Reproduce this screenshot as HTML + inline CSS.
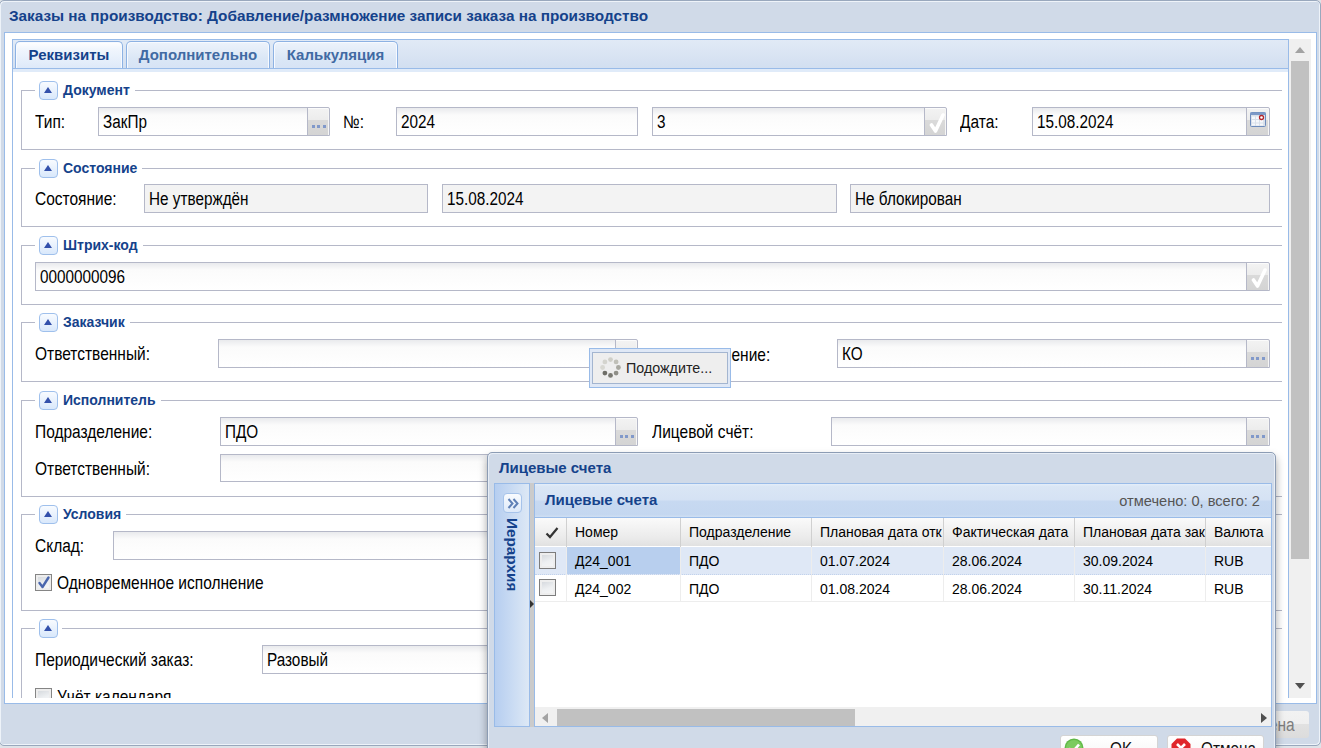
<!DOCTYPE html>
<html><head><meta charset="utf-8">
<style>
*{box-sizing:border-box;margin:0;padding:0}
html,body{width:1321px;height:748px;overflow:hidden;background:#dfe3e8;font-family:"Liberation Sans",sans-serif;position:relative}
.a{position:absolute}
.win{left:-1px;top:0;width:1322px;height:746px;background:#d0dae8;border:1px solid #99a8bd;border-radius:5px;box-shadow:inset 1px 1px 0 #eef3f9,inset -1px -1px 0 #eef3f9}
.title{left:9px;top:0;height:31px;line-height:31px;font-size:15.3px;font-weight:bold;color:#15428b;white-space:nowrap}
.body{left:4px;top:32px;width:1313px;height:672px;background:#fff;border:1px solid #99bbe8}
.strip{left:12px;top:39px;width:1277px;height:31px;background:linear-gradient(#e1eaf6,#d1def0);border:1px solid #99bbe8;border-bottom:none}
.stripline{left:12px;top:68px;width:1277px;height:1px;background:#99bbe8}
.stripband{left:13px;top:69px;width:1275px;height:3px;background:#e0ebf9}
.tab{top:41px;height:28px;border:1px solid #8db2e3;border-bottom:none;border-radius:5px 5px 0 0;background:linear-gradient(#edf3fb,#dbe7f6 60%,#d6e3f5);box-shadow:inset 1px 1px 0 #f7faff,inset -1px 0 0 #f7faff;font-size:15px;font-weight:bold;color:#416aa3;line-height:26px;text-align:center;white-space:nowrap}
.tab.act{background:linear-gradient(#ffffff,#f1f6fd 25%,#dde9f9);color:#15428b;height:28px}
.tpl{left:12px;top:69px;width:1px;height:629px;background:#99bbe8}
.tpr{left:1288px;top:69px;width:1px;height:629px;background:#99bbe8}
.fs{left:21px;width:1261px;border:1px solid #b5b8c8;border-right:none}
.fsmask{background:#fff;height:3px}
.tool{left:39px;width:19px;height:19px;border:1px solid #9fc0ec;border-radius:4px;background:linear-gradient(#f8fbff,#d9e8fb)}
.tool:after{content:"";position:absolute;left:4px;top:5px;border-left:4.5px solid transparent;border-right:4.5px solid transparent;border-bottom:6px solid #3350ab}
.leg{font-size:14px;font-weight:bold;color:#15428b;white-space:nowrap;height:19px;line-height:19px;background:#fff;padding:0 5px 0 28px}
.lbl{font-size:15.5px;color:#000;white-space:nowrap;line-height:20px;height:20px;transform:scaleY(1.15)}
.v{display:inline-block;transform:scaleY(1.15)}
.inp{height:29px;border:1px solid #b5b8c8;background:linear-gradient(#e9eaed 0,#fbfbfb 7px,#fff 100%);font-size:15.3px;line-height:27px;padding-left:4px;color:#000;white-space:nowrap;overflow:hidden}
.ro{background:#f3f3f3}
.trg{width:23px;height:29px;border:1px solid #b5b8c8;border-radius:0 2px 0 0;background:linear-gradient(#f3f3f3 0,#ececec 45%,#dadada 45%,#d4d4d4 100%);box-shadow:inset 0 1px 0 #fbfbfb,inset -1px 0 0 #f6f6f6}
.dots{position:absolute;left:4px;top:17px;width:14px;height:3px;background:linear-gradient(to right,#8199ca 3px,transparent 3px,transparent 5px,#8199ca 5px,#8199ca 8px,transparent 8px,transparent 11px,#8199ca 11px)}
.sb{left:1289px;top:39px;width:22px;height:659px;background:#f0f0f0}
.thumb{left:1291px;top:61px;width:18px;height:498px;background:#c1c1c1}
.upar{left:1295px;top:47px;border-left:5px solid transparent;border-right:5px solid transparent;border-bottom:6px solid #a3a3a3}
.dnar{left:1295px;top:683px;border-left:5px solid transparent;border-right:5px solid transparent;border-top:6px solid #505050}
.cb{width:17px;height:17px;border:1.5px solid #858585;background:linear-gradient(160deg,#cfd3d8,#eef0f2 55%,#f7f7f7);box-shadow:inset 0 0 0 2px #ededed}

.hd{top:34px;width:1px;height:29px;background:#d0d0d0}
.ht{top:38px;height:21px;line-height:21px;font-size:14px;color:#000;white-space:nowrap}
.rl{width:1px;background:#ededed}
.ct{height:27px;line-height:28px;font-size:14px;color:#000;white-space:nowrap}
.gcb{width:17px;height:17px;border:1.5px solid #7d7d7d;background:linear-gradient(160deg,#cfd3d8,#eef0f2 55%,#f7f7f7);box-shadow:inset 0 0 0 2px #eeeeee}
.pbtn{height:30px;border:1px solid #d4d4d4;border-radius:3px;background:linear-gradient(#ffffff,#f4f4f4)}
</style></head><body>
<div class="a win"></div>
<div class="a title">Заказы на производство: Добавление/размножение записи заказа на производство</div>
<div class="a body"></div>

<!-- tab strip -->
<div class="a strip"></div>
<div class="a tab act" style="left:15px;width:108px">Реквизиты</div>
<div class="a tab" style="left:126px;width:144px">Дополнительно</div>
<div class="a tab" style="left:273px;width:125px">Калькуляция</div>
<div class="a stripline"></div>
<div class="a stripband"></div>
<div class="a tpl"></div>
<div class="a tpr"></div>

<!-- content clip -->
<div class="a" id="content" style="left:13px;top:71px;width:1275px;height:627px;overflow:hidden">
 <div class="a" style="left:-13px;top:-71px;width:1321px;height:748px">

 <!-- Документ -->
 <div class="a fs" style="top:90px;height:60px"></div>
 <div class="a leg" style="left:35px;top:81px">Документ</div>
 <div class="a tool" style="top:81px"></div>
 <div class="a lbl" style="left:35px;top:112px">Тип:</div>
 <div class="a inp" style="left:98px;top:107px;width:210px"><span class="v">ЗакПр</span></div>
 <div class="a trg" style="left:307px;top:107px"><div class="dots"></div></div>
 <div class="a lbl" style="left:343px;top:112px">№:</div>
 <div class="a inp" style="left:396px;top:107px;width:242px"><span class="v">2024</span></div>
 <div class="a inp" style="left:652px;top:107px;width:273px"><span class="v">3</span></div>
 <div class="a trg chk" style="left:924px;top:107px"><svg class="a" style="left:3px;top:4px" width="17" height="21" viewBox="0 0 17 21"><path d="M3.5 13 L7.5 19 L15 3" stroke="#fff" stroke-width="3.6" fill="none" stroke-linejoin="round" stroke-linecap="round"/></svg></div>
 <div class="a lbl" style="left:960px;top:112px">Дата:</div>
 <div class="a inp" style="left:1032px;top:107px;width:215px"><span class="v">15.08.2024</span></div>
 <div class="a trg cal" style="width:24px;left:1246px;top:107px"><svg class="a" style="left:3px;top:4px" width="16" height="15" viewBox="0 0 16 15"><rect x="0.5" y="0.5" width="15" height="14" rx="1" fill="#d9e0ea" stroke="#6d8cbd"/><rect x="0.5" y="0.5" width="15" height="2.5" fill="#7c99c7"/><g fill="#f6f8fb"><rect x="2" y="4.5" width="3" height="2.5"/><rect x="6" y="4.5" width="3" height="2.5"/><rect x="2" y="8" width="3" height="2.5"/><rect x="6" y="8" width="3" height="2.5"/><rect x="10" y="8" width="3" height="2.5"/><rect x="2" y="11.5" width="3" height="2"/><rect x="6" y="11.5" width="3" height="2"/><rect x="10" y="11.5" width="3" height="2"/></g><circle cx="11.5" cy="5.5" r="2" fill="#fff" stroke="#b3262b" stroke-width="1.3"/></svg></div>

 <!-- Состояние -->
 <div class="a fs" style="top:168px;height:59px"></div>
 <div class="a leg" style="left:35px;top:159px">Состояние</div>
 <div class="a tool" style="top:159px"></div>
 <div class="a lbl" style="left:35px;top:189px">Состояние:</div>
 <div class="a inp ro" style="left:144px;top:184px;width:284px"><span class="v">Не утверждён</span></div>
 <div class="a inp ro" style="left:442px;top:184px;width:395px"><span class="v">15.08.2024</span></div>
 <div class="a inp ro" style="left:850px;top:184px;width:420px"><span class="v">Не блокирован</span></div>

 <!-- Штрих-код -->
 <div class="a fs" style="top:245px;height:60px"></div>
 <div class="a leg" style="left:35px;top:236px">Штрих-код</div>
 <div class="a tool" style="top:236px"></div>
 <div class="a inp" style="left:35px;top:262px;width:1212px"><span class="v">0000000096</span></div>
 <div class="a trg chk" style="width:24px;left:1246px;top:262px"><svg class="a" style="left:3px;top:4px" width="17" height="21" viewBox="0 0 17 21"><path d="M3.5 13 L7.5 19 L15 3" stroke="#fff" stroke-width="3.6" fill="none" stroke-linejoin="round" stroke-linecap="round"/></svg></div>

 <!-- Заказчик -->
 <div class="a fs" style="top:322px;height:60px"></div>
 <div class="a leg" style="left:35px;top:313px">Заказчик</div>
 <div class="a tool" style="top:313px"></div>
 <div class="a lbl" style="left:35px;top:344px">Ответственный:</div>
 <div class="a inp" style="left:218px;top:339px;width:398px"></div>
 <div class="a trg" style="left:615px;top:339px"><div class="dots"></div></div>
 <div class="a lbl" style="left:653px;top:345px">Подразделение:</div>
 <div class="a inp" style="left:837px;top:339px;width:410px"><span class="v">КО</span></div>
 <div class="a trg" style="width:24px;left:1246px;top:339px"><div class="dots"></div></div>

 <!-- Исполнитель -->
 <div class="a fs" style="top:400px;height:97px"></div>
 <div class="a leg" style="left:35px;top:391px">Исполнитель</div>
 <div class="a tool" style="top:391px"></div>
 <div class="a lbl" style="left:35px;top:422px">Подразделение:</div>
 <div class="a inp" style="left:220px;top:417px;width:396px"><span class="v">ПДО</span></div>
 <div class="a trg" style="left:615px;top:417px"><div class="dots"></div></div>
 <div class="a lbl" style="left:652px;top:422px">Лицевой счёт:</div>
 <div class="a inp" style="left:831px;top:417px;width:416px"></div>
 <div class="a trg" style="width:24px;left:1246px;top:417px"><div class="dots"></div></div>
 <div class="a lbl" style="left:35px;top:459px">Ответственный:</div>
 <div class="a inp" style="left:220px;top:454px;width:396px;height:28px"></div>
 <div class="a trg" style="left:615px;top:454px;height:28px"><div class="dots"></div></div>

 <!-- Условия -->
 <div class="a fs" style="top:514px;height:97px"></div>
 <div class="a leg" style="left:35px;top:505px">Условия</div>
 <div class="a tool" style="top:505px"></div>
 <div class="a lbl" style="left:35px;top:536px">Склад:</div>
 <div class="a inp" style="left:113px;top:531px;width:1134px"></div>
 <div class="a trg" style="width:24px;left:1246px;top:531px"><div class="dots"></div></div>
 <div class="a cb chkd" style="left:35px;top:574px"><svg class="a" style="left:1px;top:0px" width="14" height="15" viewBox="0 0 14 15"><path d="M2.5 8 L5.5 12 L11.5 2.5" stroke="#4a66ad" stroke-width="2.4" fill="none" stroke-linecap="round" stroke-linejoin="round"/></svg></div>
 <div class="a lbl" style="left:57px;top:573px">Одновременное исполнение</div>

 <!-- last -->
 <div class="a fs" style="top:628px;height:120px"></div>
 <div class="a leg" style="left:35px;top:619px;padding:0 0 0 27px"></div>
 <div class="a tool" style="top:619px"></div>
 <div class="a lbl" style="left:35px;top:650px">Периодический заказ:</div>
 <div class="a inp" style="left:262px;top:645px;width:985px"><span class="v">Разовый</span></div>
 <div class="a trg" style="width:24px;left:1246px;top:645px"></div>
 <div class="a cb" style="left:35px;top:688px"></div>
 <div class="a lbl" style="left:57px;top:687px">Учёт календаря</div>
 </div>
</div>

<!-- scrollbar -->
<div class="a sb"></div>
<div class="a thumb"></div>
<div class="a upar"></div>
<div class="a dnar"></div>


<!-- bottom toolbar button of main window -->
<div class="a" style="left:1200px;top:711px;width:109px;height:27px;border-radius:3px;background:linear-gradient(#f2f2f2 0,#efefef 50%,#e1e1e1 50%,#dcdcdc 100%);font-size:15px;color:#a0a0a0;line-height:27px;padding-left:39px;overflow:hidden"><span class="v" style="font-size:15.5px;color:#7d7d7d">Отмена</span></div>

<!-- loading mask -->
<div class="a" style="left:589px;top:348px;width:142px;height:40px;border:1px solid #99bbe8;background:#dfe8f6"></div>
<div class="a" style="left:592px;top:352px;width:136px;height:32px;border:1px solid #a3b5d0;background:#eeeeee"></div>
<svg class="a" style="left:600px;top:357px" width="21" height="21" viewBox="0 0 21 21">
 <circle cx="10.5" cy="2.6" r="2.4" fill="#cfcfc8"/>
 <circle cx="16.1" cy="4.9" r="2.4" fill="#c0c0b8"/>
 <circle cx="18.4" cy="10.5" r="2.4" fill="#a8a8a0"/>
 <circle cx="16.1" cy="16.1" r="2.4" fill="#8f8f88"/>
 <circle cx="10.5" cy="18.4" r="2.4" fill="#7a7a73"/>
 <circle cx="4.9" cy="16.1" r="2.4" fill="#6e6e68"/>
 <circle cx="2.6" cy="10.5" r="2.4" fill="#d8d8d2"/>
 <circle cx="4.9" cy="4.9" r="2.4" fill="#d4d4ce"/>
</svg>
<div class="a" style="left:626px;top:358px;height:20px;line-height:20px;font-size:14.3px;color:#222;white-space:nowrap">Подождите...</div>

<!-- popup shadow -->

<!-- popup window -->
<div class="a" style="left:487px;top:452px;width:789px;height:310px;background:#d0dae8;border:1px solid #8c9cb4;border-radius:5px;box-shadow:inset 1px 1px 0 #e8eef6,inset -1px 0 0 #e8eef6,0 5px 8px 0 rgba(0,0,0,0.36)"></div>
<div class="a" style="left:499px;top:458px;height:20px;line-height:20px;font-size:15px;font-weight:bold;color:#15428b;white-space:nowrap">Лицевые счета</div>

<!-- west collapsed -->
<div class="a" style="left:494px;top:483px;width:36px;height:244px;border:1px solid #99bbe8;background:linear-gradient(to right,#b6cef0,#c9dbf3 50%,#dde8f5)"></div>
<div class="a" style="left:503px;top:493px;width:19px;height:20px;border:1px solid #a6c3ea;border-radius:4px;background:linear-gradient(#f9fbfe,#dde9f9)"></div>
<svg class="a" style="left:507px;top:498px" width="13" height="11" viewBox="0 0 13 11"><path d="M1.5 1 L5.5 5.5 L1.5 10 M6.5 1 L10.5 5.5 L6.5 10" stroke="#5f80b6" stroke-width="2" fill="none"/></svg>
<div class="a" style="left:476px;top:544px;width:72px;height:20px;line-height:20px;font-size:15.3px;font-weight:bold;color:#15428b;white-space:nowrap;transform:rotate(90deg);text-align:left">Иерархия</div>
<!-- splitter -->
<div class="a" style="left:530px;top:483px;width:4px;height:244px;background:#cbcbcb"></div>
<div class="a" style="left:530px;top:600px;border-top:4px solid transparent;border-bottom:4px solid transparent;border-left:4px solid #333"></div>

<!-- grid panel -->
<div class="a" style="left:534px;top:483px;width:738px;height:244px;border:1px solid #99bbe8;background:#fff;overflow:hidden">
 <div class="a" style="left:0;top:0;width:736px;height:34px;border-bottom:1px solid #99bbe8;background:linear-gradient(#e4eefa 0,#dae6f5 8%,#d5e2f4 48%,#c7d9f1 52%,#c4d7f0 92%,#cfdff3 100%)"></div>
 <div class="a" style="left:10px;top:5px;height:21px;line-height:21px;font-size:15px;font-weight:bold;color:#15428b;white-space:nowrap">Лицевые счета</div>
 <div class="a" style="left:583px;top:7px;width:142px;height:21px;line-height:21px;font-size:14.6px;color:#555;white-space:nowrap;text-align:right">отмечено: 0, всего: 2</div>
 <!-- column headers -->
 <div class="a" style="left:0;top:34px;width:736px;height:29px;background:linear-gradient(#fafafa,#ebebeb 70%,#e1e1e1);border-bottom:1px solid #ffffff"></div>
 <div class="a hd" style="left:31px"></div><div class="a hd" style="left:145px"></div><div class="a hd" style="left:276px"></div><div class="a hd" style="left:408px"></div><div class="a hd" style="left:539px"></div><div class="a hd" style="left:670px"></div>
 <svg class="a" style="left:10px;top:42px" width="14" height="14" viewBox="0 0 14 14"><path d="M1.5 7.5 L5 11 L12.5 2" stroke="#333" stroke-width="2.2" fill="none"/></svg>
 <div class="a ht" style="left:40px">Номер</div>
 <div class="a ht" style="left:154px">Подразделение</div>
 <div class="a ht" style="left:285px;width:124px;overflow:hidden">Плановая дата отк</div>
 <div class="a ht" style="left:417px">Фактическая дата</div>
 <div class="a ht" style="left:548px;width:123px;overflow:hidden">Плановая дата зак</div>
 <div class="a ht" style="left:679px">Валюта</div>
 <!-- rows -->
 <div class="a" style="left:0;top:63px;width:736px;height:28px;background:#dfe8f6;border-bottom:1px dotted #c2d2ec"></div>
 <div class="a" style="left:32px;top:63px;width:113px;height:27px;background:#b8cfee"></div>
 <div class="a" style="left:0;top:91px;width:736px;height:27px;border-bottom:1px solid #ededed"></div>
 <div class="a rl" style="left:31px;top:63px;height:55px"></div><div class="a rl" style="left:145px;top:63px;height:55px"></div><div class="a rl" style="left:276px;top:63px;height:55px"></div><div class="a rl" style="left:408px;top:63px;height:55px"></div><div class="a rl" style="left:539px;top:63px;height:55px"></div><div class="a rl" style="left:670px;top:63px;height:55px"></div>
 <div class="a gcb" style="left:4px;top:68px"></div>
 <div class="a gcb" style="left:4px;top:95px"></div>
 <div class="a ct" style="left:40px;top:63px">Д24_001</div><div class="a ct" style="left:154px;top:63px">ПДО</div><div class="a ct" style="left:285px;top:63px">01.07.2024</div><div class="a ct" style="left:417px;top:63px">28.06.2024</div><div class="a ct" style="left:548px;top:63px">30.09.2024</div><div class="a ct" style="left:679px;top:63px">RUB</div>
 <div class="a ct" style="left:40px;top:91px">Д24_002</div><div class="a ct" style="left:154px;top:91px">ПДО</div><div class="a ct" style="left:285px;top:91px">01.08.2024</div><div class="a ct" style="left:417px;top:91px">28.06.2024</div><div class="a ct" style="left:548px;top:91px">30.11.2024</div><div class="a ct" style="left:679px;top:91px">RUB</div>
 <!-- h scrollbar -->
 <div class="a" style="left:0;top:223px;width:736px;height:19px;background:#f0f0f0"></div>
 <div class="a" style="left:22px;top:225px;width:298px;height:17px;background:#c1c1c1"></div>
 <div class="a" style="left:7px;top:229px;border-top:5px solid transparent;border-bottom:5px solid transparent;border-right:6px solid #a3a3a3"></div>
 <div class="a" style="left:726px;top:229px;border-top:5px solid transparent;border-bottom:5px solid transparent;border-left:6px solid #505050"></div>
</div>

<!-- popup buttons -->
<div class="a pbtn" style="left:1060px;top:735px;width:98px">
 <svg class="a" style="left:3px;top:2px" width="20" height="20" viewBox="0 0 20 20"><circle cx="10" cy="10" r="9.5" fill="#5fb846"/><circle cx="10" cy="10" r="8" fill="#7ccb5f"/><path d="M5 10.5 L8.5 14 L15 6.5" stroke="#fff" stroke-width="2.6" fill="none"/></svg>
 <div class="a" style="left:49px;top:3px;font-size:15.3px;line-height:20px;color:#111;transform:scaleY(1.15)">OK</div>
</div>
<div class="a pbtn" style="left:1167px;top:735px;width:97px">
 <svg class="a" style="left:3px;top:2px" width="20" height="20" viewBox="0 0 20 20"><path d="M6 0.5 H14 L19.5 6 V14 L14 19.5 H6 L0.5 14 V6 Z" fill="#e0262b"/><path d="M6 6 L14 14 M14 6 L6 14" stroke="#fff" stroke-width="2.6"/></svg>
 <div class="a" style="left:33px;top:3px;font-size:15.3px;line-height:20px;color:#111;transform:scaleY(1.15)">Отмена</div>
</div>
</body></html>
